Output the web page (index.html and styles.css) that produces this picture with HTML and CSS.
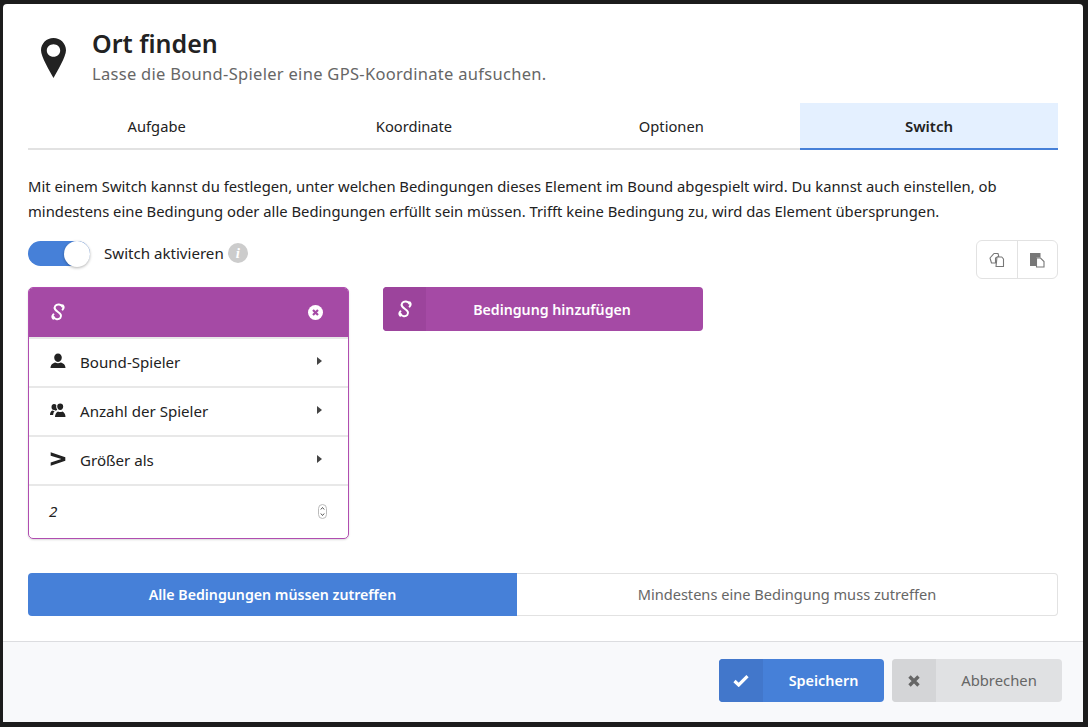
FILE: index.html
```html
<!DOCTYPE html>
<html lang="de">
<head>
<meta charset="utf-8">
<title>Ort finden</title>
<link rel="stylesheet" href="styles.css">
</head>
<body>
<div class="modal">
  <div class="content">
    <header class="head">
      <svg class="pin" viewBox="0 0 25 40"><path fill-rule="evenodd" fill="#222" d="M12.500 0C5.600 0 0 5.500 0 12.300c0 6.500 8.500 20.500 12.500 27.700C16.500 32.800 25 18.800 25 12.300 25 5.500 19.400 0 12.500 0zm0 6.200c3.700 0 6.700 2.800 6.700 6.300s-3 6.300-6.700 6.300-6.700-2.800-6.700-6.300 3-6.300 6.700-6.300z"/></svg>
      <div class="head-text">
        <h1>Ort finden</h1>
        <p>Lasse die Bound-Spieler eine GPS-Koordinate aufsuchen.</p>
      </div>
    </header>
    <nav class="tabs">
      <div class="tab">Aufgabe</div>
      <div class="tab">Koordinate</div>
      <div class="tab">Optionen</div>
      <div class="tab active">Switch</div>
    </nav>
    <p class="intro">Mit einem Switch kannst du festlegen, unter welchen Bedingungen dieses Element im Bound abgespielt wird. Du kannst auch einstellen, ob<br>mindestens eine Bedingung oder alle Bedingungen erfüllt sein müssen. Trifft keine Bedingung zu, wird das Element übersprungen.</p>
    <div class="toggle-row">
      <div class="toggle-group">
        <span class="toggle"><span class="knob"></span></span>
        <span class="toggle-label">Switch aktivieren</span>
        <span class="info">i</span>
      </div>
      <div class="clip">
        <span class="clip-btn">
          <svg width="16" height="16" viewBox="0 0 16 16" fill="#fff" stroke="#777" stroke-width="1.100" stroke-linejoin="round"><path d="M5 1.500h4l.8 3-3.300 1.500v5H2.500L1 6z"/><path d="M8 5h4.800l1.700 2v7.500H7z"/></svg>
        </span>
        <span class="clip-btn">
          <svg width="16" height="16" viewBox="0 0 16 16"><path fill="#777" d="M1 1h10.500v4.500H7.500V14H1z"/><path fill="#fff" stroke="#777" stroke-width="1.100" d="M7.500 6h4l3.500 3.500v5.500H7.500z"/></svg>
        </span>
      </div>
    </div>
    <div class="builder">
      <div class="card">
        <div class="card-head">
          <svg class="s-icon" viewBox="0 0 13 18"><path d="M10.800 3.600C9.800 1 5.400.6 3.700 3 2 5.500 4 7.300 6.500 9c2.600 1.700 4 3.600 2.300 5.800-1.800 2.200-5.600 1.800-6.700-1"/><path d="M11.300 2.300c1.100 1.400 1 3-.2 4.300M1.700 15.700c-1.100-1.400-1-3 .2-4.300"/></svg>
          <svg class="close-icon" viewBox="0 0 15 15"><circle cx="7.500" cy="7.500" r="7.500" fill="#fff"/><path d="M5 5l5 5M10 5l-5 5" stroke="#a54aa5" stroke-width="2.200"/></svg>
        </div>
        <div class="row">
          <svg class="row-icon" viewBox="0 0 18 18"><path fill="#222" d="M9 1.500c2.300 0 3.800 1.700 3.800 4S11.300 10 9 10 5.200 7.800 5.200 5.500 6.700 1.500 9 1.500zM1.500 16c0-3.400 2.200-5 4.800-5.600.8.500 1.700.8 2.700.8s1.900-.3 2.700-.8c2.600.6 4.800 2.200 4.800 5.600z"/></svg>
          <span class="row-text">Bound-Spieler</span>
          <span class="caret"></span>
        </div>
        <div class="row">
          <svg class="row-icon" viewBox="0 0 18 18"><path fill="#222" d="M11.200 2.500c1.900 0 3 1.300 3 3s-1.200 3.500-3 3.500-3-1.800-3-3.500 1.100-3 3-3zM5 3c1 0 1.800.4 2.300 1-.3 1.800 0 3.400 1 4.800-.5.300-1 .7-1.500.9C6.200 9.300 5.600 9.100 5 9.100 3.400 9.100 2.500 7.600 2.500 6S3.400 3 5 3zM6 16c0-2.800 1.400-4.700 3-5.600.7.500 1.400.7 2.200.7s1.500-.2 2.200-.7c1.700.8 3.100 2.600 3.100 5.600zM1 14c0-2.500 1.100-3.800 2.400-4.400.5.300 1 .5 1.600.5h.6c-.9 1-1.400 2.300-1.500 3.900z"/></svg>
          <span class="row-text">Anzahl der Spieler</span>
          <span class="caret"></span>
        </div>
        <div class="row">
          <svg class="row-icon" viewBox="0 0 16 16"><path fill="#222" d="M1.500 2l13 4.500v3L1.500 14v-3l9.500-3-9.500-3z"/></svg>
          <span class="row-text">Größer als</span>
          <span class="caret"></span>
        </div>
        <div class="row row-input">
          <span class="row-value">2</span>
          <svg class="spin" viewBox="0 0 9 15"><rect x=".5" y=".5" width="8" height="14" rx="4" fill="#fff" stroke="#bbb"/><path d="M2.800 5.500l1.700-2 1.700 2M2.800 9.500l1.700 2 1.700-2" fill="none" stroke="#555"/></svg>
        </div>
      </div>
      <div class="add">
        <span class="add-icon"><svg class="s-icon" viewBox="0 0 13 18"><path d="M10.800 3.600C9.800 1 5.400.6 3.700 3 2 5.500 4 7.300 6.500 9c2.600 1.700 4 3.600 2.300 5.800-1.800 2.200-5.600 1.800-6.700-1"/><path d="M11.300 2.300c1.100 1.400 1 3-.2 4.300M1.700 15.700c-1.100-1.400-1-3 .2-4.300"/></svg></span>
        <span class="add-label">Bedingung hinzufügen</span>
      </div>
    </div>
    <div class="segments">
      <div class="seg seg-on"><span class="seg-text">Alle Bedingungen müssen zutreffen</span></div>
      <div class="seg seg-off"><span class="seg-text">Mindestens eine Bedingung muss zutreffen</span></div>
    </div>
  </div>
  <footer class="foot">
    <div class="btn btn-save">
      <span class="btn-icon"><svg width="16" height="13" viewBox="0 0 16 13"><path d="M1.500 7l4.200 4L14.500 2.200" fill="none" stroke="#fff" stroke-width="3.200"/></svg></span>
      <span class="btn-label">Speichern</span>
    </div>
    <div class="btn btn-cancel">
      <span class="btn-icon"><svg width="12" height="12" viewBox="0 0 12 12"><path d="M1.500 1.500l9 9M10.500 1.500l-9 9" fill="none" stroke="#666" stroke-width="3.400"/></svg></span>
      <span class="btn-label">Abbrechen</span>
    </div>
  </footer>
</div>
</body>
</html>
```
FILE: styles.css
```css
* { box-sizing: border-box; }
html, body { margin: 0; height: 100%; }
body {
  background: #1c1c1c;
  padding: 4px 5px 5px 3px;
  font-family: "Noto Sans", "Open Sans", sans-serif;
  font-size: 14px;
  color: #222;
  overflow: hidden;
}
.modal {
  width: 1080px;
  height: 718px;
  background: #fff;
  border-radius: 4px 4px 0 0;
  display: flex;
  flex-direction: column;
  overflow: hidden;
}
.content { flex: 1; padding: 0 25px; display: flex; flex-direction: column; }
.head { display: flex; align-items: flex-start; height: 99px; padding: 34px 0 0 13px; gap: 26px; }
.pin { width: 25px; height: 40px; flex: none; }
.head-text { margin-top: -11px; }
.head h1 { margin: 0; font-size: 25px; line-height: 32px; font-weight: 600; color: #222; }
.head p { margin: 4px 0 0; font-size: 16.500px; line-height: 22px; letter-spacing: .3px; color: #666; }
.tabs { display: flex; height: 47px; border-bottom: 2px solid #e2e2e2; }
.tab { flex: 1; display: flex; align-items: center; justify-content: center; font-size: 14.700px; color: #222; }
.tab.active { flex: none; width: 258px; background: #e4f0ff; font-size: 15px; font-weight: 600; margin-bottom: -2px; border-bottom: 2px solid #4680d8; }
.intro { margin: 24px 0 0; font-size: 14.800px; line-height: 25px; color: #222; white-space: nowrap; }
.toggle-row { display: flex; justify-content: space-between; align-items: flex-start; margin-top: 16px; }
.toggle-group { display: flex; align-items: center; height: 26px; }
.toggle { display: block; width: 62px; height: 25px; border-radius: 13px; background: #4680d8; position: relative; }
.knob { position: absolute; right: 0; top: 0; width: 26px; height: 26px; border-radius: 50%; background: #fff; box-shadow: 0 1px 3px rgba(0,0,0,.3); }
.toggle-label { margin-left: 14px; font-size: 15.100px; }
.info { margin-left: 4px; width: 20px; height: 20px; border-radius: 50%; background: #ccc; color: #fff; font: italic 700 15px/20px "Liberation Serif", serif; text-align: center; }
.clip { display: flex; width: 82px; height: 39px; border: 1px solid #e2e2e2; border-radius: 6px; }
.clip-btn { flex: 1; display: flex; align-items: center; justify-content: center; }
.clip-btn + .clip-btn { border-left: 1px solid #e2e2e2; }
.builder { display: flex; align-items: flex-start; gap: 34px; margin-top: 8px; }
.card { width: 321px; height: 252px; border: 1px solid #b04db0; border-radius: 5px; box-shadow: 0 1px 2px rgba(0,0,0,.15); overflow: hidden; }
.card-head { height: 50px; margin: -1px -1px 0; background: #a54aa5; display: flex; align-items: center; justify-content: space-between; padding: 0 26px 0 23px; }
.s-icon { width: 14px; height: 18px; fill: none; stroke: #fff; stroke-width: 2; stroke-linecap: round; }
.close-icon { width: 15px; height: 15px; }
.row { height: 49px; border-top: 2px solid #e8e8e8; display: flex; align-items: center; padding: 0 26px 0 20px; font-size: 15.100px; }
.row-icon { width: 18px; height: 18px; flex: none; margin-top: -3px; }
.row-text { margin-left: 13px; margin-top: -2px; flex: 1; }
.caret { width: 0; height: 0; border-left: 5px solid #444; border-top: 4.500px solid transparent; border-bottom: 4.500px solid transparent; margin-top: -4px; }
.row-input { height: 54px; padding-right: 21px; }
.row-value { flex: 1; font-style: italic; margin-top: -3px; }
.spin { width: 9px; height: 15px; margin-top: -2px; }
.add { width: 320px; height: 44px; background: #a54aa5; border-radius: 4px; display: flex; align-items: center; color: #fff; font-weight: 600; }
.add-icon { width: 43px; height: 44px; background: #9c449c; border-radius: 4px 0 0 4px; display: flex; align-items: center; justify-content: center; }
.add-label { flex: 1; text-align: center; font-size: 14.200px; padding-right: 25px; }
.segments { display: flex; height: 43px; margin-top: 34px; }
.seg { display: flex; align-items: center; justify-content: center; }
.seg-text { margin-top: -1px; }
.seg-on { width: 489px; background: #4680d8; color: #fff; font-weight: 600; font-size: 14.200px; border-radius: 4px 0 0 4px; }
.seg-off { flex: 1; border: 1px solid #e2e2e2; border-left: 0; border-radius: 0 4px 4px 0; font-size: 14.600px; color: #666; }
.foot { height: 81px; flex: none; background: #f8f9fb; border-top: 1px solid #dcdde0; display: flex; justify-content: flex-end; align-items: flex-start; padding: 17px 21px 0 0; gap: 8px; }
.btn { height: 43px; border-radius: 4px; display: flex; align-items: center; overflow: hidden; }
.btn-icon { width: 44px; height: 43px; display: flex; align-items: center; justify-content: center; }
.btn-label { flex: 1; text-align: center; margin-top: -1px; }
.btn-save { width: 165px; background: #4680d8; color: #fff; font-weight: 600; font-size: 14.400px; }
.btn-save .btn-icon { background: #4277cb; }
.btn-cancel { width: 170px; background: #e0e1e3; color: #666; font-size: 14.800px; }
.btn-cancel .btn-icon { background: #d4d5d7; }
```
